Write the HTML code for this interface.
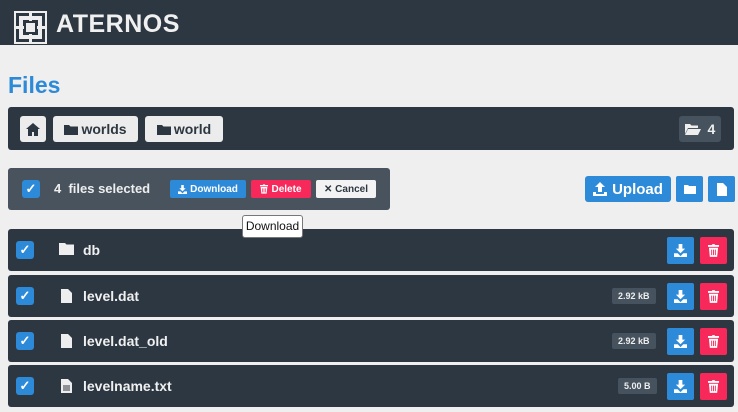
<!DOCTYPE html>
<html><head><style>
*{box-sizing:border-box;margin:0;padding:0}
body{width:738px;height:412px;background:#efefef;font-family:"Liberation Sans",sans-serif;position:relative;overflow:hidden}
.abs{position:absolute}
.hdr{left:0;top:0;width:738px;height:45px;background:#2d3741}
.logo{left:14px;top:11px;width:33px;height:33px;background:#eee}
.brand{left:56px;top:10px;color:#f0f0f0;font-size:25px;font-weight:bold;letter-spacing:.5px}
h1{position:absolute;left:8px;top:72px;color:#2d8ad8;font-size:23px;font-weight:bold}
.bar{background:#2d3741;border-radius:3px}
.btn{position:absolute;background:#ececec;border-radius:3px;color:#2d3741;font-weight:bold;font-size:14px;display:flex;align-items:center;justify-content:center;gap:3px}
.sel{background:#48535e}
.cb{position:absolute;width:18px;height:18px;background:#2d8ad8;border-radius:3px;color:#fff;font-size:13px;font-weight:bold;text-align:center;line-height:18px}
.sbtn{position:absolute;height:18px;top:180px;font-size:10px;font-weight:bold;color:#fff;display:flex;align-items:center;justify-content:center;border-radius:2px;gap:3px}
.blue{background:#2d8ad8;color:#fff}
.red{background:#f7285a;color:#fff}
.sq{position:absolute;width:27px;height:27px;border-radius:2px;display:flex;align-items:center;justify-content:center}
.name{position:absolute;color:#f0f0f0;font-weight:bold;font-size:14px}
.size{position:absolute;background:#46525d;color:#eee;font-size:9px;font-weight:bold;height:16px;line-height:16px;padding:0 6px;border-radius:2px}
</style></head><body>
<svg width="0" height="0" style="position:absolute"><defs>
<symbol id="dl" viewBox="0 0 14 14"><path d="M5 0h4v5h3L7 10 2 5h3z M0 10h4l3 3 3-3h4v4H0z" fill="#fff"/></symbol>
<symbol id="tr" viewBox="0 0 12 14"><path d="M0 1h4l1-1h2l1 1h4v2H0z M1 4h10l-1 10H2z" fill="#fff"/><path d="M4 6v6M6 6v6M8 6v6" stroke="#f7285a" stroke-width="1"/></symbol>
<symbol id="up" viewBox="0 0 14 14"><path d="M5 10h4V5h3L7 0 2 5h3z M0 10h3v2h8v-2h3v4H0z" fill="#fff"/></symbol>
</defs></svg>
<div class="abs hdr"></div>
<div class="abs logo"><svg width="33" height="33" viewBox="0 0 33 33"><rect x="3.5" y="3.5" width="26" height="26" fill="none" stroke="#2d3741" stroke-width="3"/><rect x="9" y="9" width="15" height="15" fill="#2d3741"/><rect x="12" y="12" width="9" height="9" fill="#eee"/><path d="M16.5 1v9M16.5 23v9M1 16.5h9M23 16.5h9" stroke="#eee" stroke-width="3"/></svg></div>
<div class="abs brand">ATERNOS</div>
<h1>Files</h1>
<div class="abs bar" style="left:8px;top:107px;width:726px;height:43px"></div>
<div class="btn" style="left:20px;top:116px;width:26px;height:26px"><svg width="14" height="13" viewBox="0 0 14 13"><path d="M7 0L0 6h2v7h4V9h2v4h4V6h2z" fill="#2d3741"/></svg></div>
<div class="btn" style="left:53px;top:116px;width:85px;height:26px"><svg width="14" height="11" viewBox="0 0 14 11"><path d="M0 1h5l1.5 1.5H14V11H0z" fill="#2d3741"/></svg>worlds</div>
<div class="btn" style="left:145px;top:116px;width:78px;height:26px"><svg width="14" height="11" viewBox="0 0 14 11"><path d="M0 1h5l1.5 1.5H14V11H0z" fill="#2d3741"/></svg>world</div>
<div class="btn" style="left:679px;top:116px;width:42px;height:26px;background:#46525d;color:#eee"><svg width="16" height="11" viewBox="0 0 16 11"><path d="M0 0h5l1.5 1.5H13V4H3L0 10z M3 5h13l-3 6H0z" fill="#eee"/></svg>&nbsp;4</div>

<div class="abs bar sel" style="left:8px;top:168px;width:382px;height:42px"></div>
<div class="cb" style="left:22px;top:180px">✓</div>
<div class="abs" style="left:54px;top:181px;color:#eee;font-weight:bold;font-size:13px">4&nbsp; files selected</div>
<div class="sbtn blue" style="left:170px;width:76px"><svg width="9" height="9"><use href="#dl"/></svg>Download</div>
<div class="sbtn red" style="left:251px;width:60px"><svg width="8" height="10"><use href="#tr"/></svg>Delete</div>
<div class="sbtn" style="left:316px;width:60px;background:#f3f3f3;color:#2d3741">✕ Cancel</div>

<div class="btn blue" style="left:585px;top:176px;width:86px;height:26px;color:#fff;font-size:15px;gap:5px"><svg width="14" height="14"><use href="#up"/></svg>Upload</div>
<div class="sq blue" style="left:676px;top:176px;height:26px"><svg width="12" height="10"><path d="M0 1h4l1 1h7v8H0z" fill="#fff"/></svg></div>
<div class="sq blue" style="left:708px;top:176px;height:26px"><svg width="10" height="13"><path d="M0 0h6l4 4v9H0z" fill="#fff"/></svg></div>

<div class="abs bar" style="left:8px;top:229px;width:726px;height:42px"></div>
<div class="abs bar" style="left:8px;top:275px;width:726px;height:42px"></div>
<div class="abs bar" style="left:8px;top:320px;width:726px;height:42px"></div>
<div class="abs bar" style="left:8px;top:365px;width:726px;height:42px"></div>

<div class="abs" style="left:242px;top:215px;width:61px;height:23px;background:#fff;border:1px solid #777;border-radius:3px;font-size:12px;line-height:21px;text-align:center;color:#111;z-index:5">Download</div>

<div class="cb" style="left:16px;top:241px">✓</div>
<div class="cb" style="left:16px;top:287px">✓</div>
<div class="cb" style="left:16px;top:332px">✓</div>
<div class="cb" style="left:16px;top:377px">✓</div>

<svg class="abs" style="left:59px;top:243px" width="15" height="12"><path d="M0 0h6l1.5 1.5H15V12H0z" fill="#eee"/></svg>
<svg class="abs" style="left:61px;top:289px" width="11" height="14"><path d="M0 0h7l4 4v10H0z" fill="#eee"/></svg>
<svg class="abs" style="left:61px;top:334px" width="11" height="14"><path d="M0 0h7l4 4v10H0z" fill="#eee"/></svg>
<svg class="abs" style="left:61px;top:379px" width="11" height="14"><path d="M0 0h7l4 4v10H0z" fill="#eee"/><path d="M2 7h7M2 9h7M2 11h7" stroke="#2d3741"/></svg>

<div class="name" style="left:83px;top:242px">db</div>
<div class="name" style="left:83px;top:288px">level.dat</div>
<div class="name" style="left:83px;top:333px">level.dat_old</div>
<div class="name" style="left:83px;top:378px">levelname.txt</div>

<div class="size" style="left:612px;top:288px">2.92 kB</div>
<div class="size" style="left:612px;top:333px">2.92 kB</div>
<div class="size" style="left:618px;top:378px">5.00 B</div>

<div class="sq blue" style="left:667px;top:237px"><svg width="13" height="13"><use href="#dl"/></svg></div><div class="sq red" style="left:700px;top:237px"><svg width="11" height="13"><use href="#tr"/></svg></div>
<div class="sq blue" style="left:667px;top:283px"><svg width="13" height="13"><use href="#dl"/></svg></div><div class="sq red" style="left:700px;top:283px"><svg width="11" height="13"><use href="#tr"/></svg></div>
<div class="sq blue" style="left:667px;top:328px"><svg width="13" height="13"><use href="#dl"/></svg></div><div class="sq red" style="left:700px;top:328px"><svg width="11" height="13"><use href="#tr"/></svg></div>
<div class="sq blue" style="left:667px;top:373px"><svg width="13" height="13"><use href="#dl"/></svg></div><div class="sq red" style="left:700px;top:373px"><svg width="11" height="13"><use href="#tr"/></svg></div>
</body></html>
